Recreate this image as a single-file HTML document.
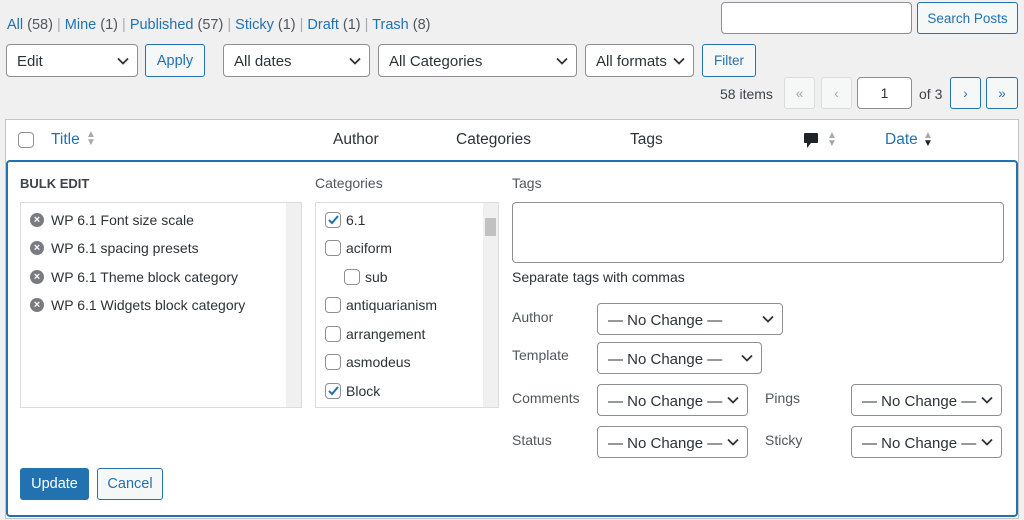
<!DOCTYPE html>
<html><head><meta charset="utf-8"><style>
*{box-sizing:border-box;margin:0;padding:0}
body{width:1024px;height:520px;background:#f0f0f1;font-family:"Liberation Sans",sans-serif;font-size:14px;color:#3c434a;position:relative;overflow:hidden}
.a{position:absolute}
.sel{position:absolute;background:#fff;border:1px solid #8c8f94;border-radius:4px;padding-left:10px;color:#2c3338;font-size:15px;display:flex;align-items:center;padding-top:2px}
.sel svg{position:absolute;right:8px;top:50%;margin-top:-4px}
.btn{position:absolute;border:1px solid #2271b1;border-radius:3px;background:#f6f7f7;color:#2271b1;font-size:13.5px;display:flex;align-items:center;justify-content:center}
.dis{border-color:#dcdcde;color:#a7aaad;background:#f6f7f7}
.lnk{color:#2271b1}
.cb{position:absolute;width:16px;height:16px;border:1px solid #8c8f94;border-radius:4px;background:#fff}
.lab{position:absolute;font-size:14px;color:#50575e}
.item{position:absolute;left:30px;font-size:14px;color:#2c3338;display:flex;align-items:center}
.x{width:14px;height:14px;border-radius:50%;background:#787c82;color:#fff;font-size:11px;line-height:14px;text-align:center;font-weight:bold;margin-right:7px}
.cat{position:absolute;font-size:14px;color:#2c3338;display:flex;align-items:center}
.cat .cb{position:relative;margin-right:5px}
</style></head><body>
<svg width="0" height="0" style="position:absolute"><defs><symbol id="ch" viewBox="0 0 12 8"><path d="M1 1.5l5 5 5-5" fill="none" stroke="#2c3338" stroke-width="1.8"/></symbol></defs></svg>

<div class="a" style="left:7px;top:17px;font-size:14.5px;color:#a7aaad;white-space:nowrap">
<span class="lnk">All</span> <span style="color:#50575e">(58)</span> | <span class="lnk">Mine</span> <span style="color:#50575e">(1)</span> | <span class="lnk">Published</span> <span style="color:#50575e">(57)</span> | <span class="lnk">Sticky</span> <span style="color:#50575e">(1)</span> | <span class="lnk">Draft</span> <span style="color:#50575e">(1)</span> | <span class="lnk">Trash</span> <span style="color:#50575e">(8)</span></div>

<div class="a" style="left:721px;top:2px;width:191px;height:32px;background:#fff;border:1px solid #8c8f94;border-radius:4px"></div>
<div class="btn" style="left:917px;top:2px;width:101px;height:32px">Search Posts</div>

<div class="sel" style="left:6px;top:44px;width:132px;height:33px">Edit<svg width="12" height="8"><use href="#ch"/></svg></div>
<div class="btn" style="left:145px;top:44px;width:60px;height:33px;font-size:14.5px">Apply</div>
<div class="sel" style="left:223px;top:44px;width:147px;height:33px">All dates<svg width="12" height="8"><use href="#ch"/></svg></div>
<div class="sel" style="left:378px;top:44px;width:199px;height:33px">All Categories<svg width="12" height="8"><use href="#ch"/></svg></div>
<div class="sel" style="left:585px;top:44px;width:109px;height:33px">All formats<svg width="12" height="8"><use href="#ch"/></svg></div>
<div class="btn" style="left:702px;top:44px;width:54px;height:33px">Filter</div>

<div class="a" style="left:720px;top:86px;font-size:14px">58 items</div>
<div class="btn dis" style="left:784px;top:77px;width:31px;height:32px">«</div>
<div class="btn dis" style="left:821px;top:77px;width:31px;height:32px">‹</div>
<div class="a" style="left:857px;top:77px;width:55px;height:32px;background:#fff;border:1px solid #8c8f94;border-radius:4px;text-align:center;line-height:30px;font-size:14px;color:#2c3338">1</div>
<div class="a" style="left:919px;top:86px;font-size:14px">of 3</div>
<div class="btn" style="left:950px;top:77px;width:31px;height:32px">›</div>
<div class="btn" style="left:986px;top:77px;width:32px;height:32px">»</div>

<div class="a" style="left:5px;top:119px;width:1014px;height:400px;background:#fff;border:1px solid #c3c4c7"></div>
<div class="cb" style="left:18px;top:132px"></div>
<div class="a" style="left:51px;top:131px;font-size:15.5px;color:#2271b1">Title</div>
<div class="a" style="left:86px;top:131px;font-size:10px;color:#a7aaad;line-height:8px">▲<br>▼</div>
<div class="a" style="left:333px;top:131px;font-size:15.5px;color:#2c3338">Author</div>
<div class="a" style="left:456px;top:131px;font-size:15.5px;color:#2c3338">Categories</div>
<div class="a" style="left:630px;top:131px;font-size:15.5px;color:#2c3338">Tags</div>
<svg class="a" style="left:803px;top:132px" width="16" height="18"><path d="M2 1h12a1 1 0 011 1v8a1 1 0 01-1 1H8l-4 5v-5H2a1 1 0 01-1-1V2a1 1 0 011-1z" fill="#1d2327"/></svg>
<div class="a" style="left:827px;top:132px;font-size:10px;color:#a7aaad;line-height:8px">▲<br>▼</div>
<div class="a" style="left:885px;top:131px;font-size:15.5px;color:#2271b1">Date</div>
<div class="a" style="left:923px;top:132px;font-size:10px;line-height:8px"><span style="color:#a7aaad">▲</span><br><span style="color:#1d2327">▼</span></div>

<div class="a" style="left:6px;top:160px;width:1012px;height:357px;background:#fff;border:2px solid #2271b1;border-radius:4px"></div>
<div class="a" style="left:20px;top:176px;font-size:13px;font-weight:bold;color:#3c434a">BULK EDIT</div>
<div class="a" style="left:20px;top:202px;width:282px;height:206px;border:1px solid #dcdcde"></div>
<div class="a" style="left:286px;top:203px;width:15px;height:204px;background:#f0f0f1"></div>
<div class="item" style="top:212px"><span class="x">×</span>WP 6.1 Font size scale</div>
<div class="item" style="top:240px"><span class="x">×</span>WP 6.1 spacing presets</div>
<div class="item" style="top:269px"><span class="x">×</span>WP 6.1 Theme block category</div>
<div class="item" style="top:297px"><span class="x">×</span>WP 6.1 Widgets block category</div>

<div class="lab" style="left:315px;top:175px">Categories</div>
<div class="a" style="left:315px;top:202px;width:184px;height:206px;border:1px solid #dcdcde"></div>
<div class="a" style="left:483px;top:203px;width:15px;height:204px;background:#f0f0f1"></div>
<div class="a" style="left:485px;top:218px;width:11px;height:18px;background:#c1c1c1"></div>
<div class="cat" style="left:325px;top:212px"><span class="cb"><svg width="16" height="16" style="position:absolute;left:-1px;top:-1px"><path d="M4 8l3 3 6-7" fill="none" stroke="#2271b1" stroke-width="2"/></svg></span>6.1</div>
<div class="cat" style="left:325px;top:240px"><span class="cb"></span>aciform</div>
<div class="cat" style="left:344px;top:269px"><span class="cb"></span>sub</div>
<div class="cat" style="left:325px;top:297px"><span class="cb"></span>antiquarianism</div>
<div class="cat" style="left:325px;top:326px"><span class="cb"></span>arrangement</div>
<div class="cat" style="left:325px;top:354px"><span class="cb"></span>asmodeus</div>
<div class="cat" style="left:325px;top:383px"><span class="cb"><svg width="16" height="16" style="position:absolute;left:-1px;top:-1px"><path d="M4 8l3 3 6-7" fill="none" stroke="#2271b1" stroke-width="2"/></svg></span>Block</div>

<div class="lab" style="left:512px;top:175px">Tags</div>
<div class="a" style="left:512px;top:202px;width:492px;height:61px;border:1px solid #8c8f94;border-radius:4px"></div>
<div class="a" style="left:512px;top:269px;font-size:14px;color:#2c3338">Separate tags with commas</div>

<div class="lab" style="left:512px;top:309px">Author</div>
<div class="sel" style="left:597px;top:303px;width:186px;height:32px">— No Change —<svg width="12" height="8"><use href="#ch"/></svg></div>
<div class="lab" style="left:512px;top:347px">Template</div>
<div class="sel" style="left:597px;top:342px;width:165px;height:32px">— No Change —<svg width="12" height="8"><use href="#ch"/></svg></div>
<div class="lab" style="left:512px;top:390px">Comments</div>
<div class="sel" style="left:597px;top:384px;width:151px;height:32px">— No Change —<svg width="12" height="8"><use href="#ch"/></svg></div>
<div class="lab" style="left:765px;top:390px">Pings</div>
<div class="sel" style="left:851px;top:384px;width:151px;height:32px">— No Change —<svg width="12" height="8"><use href="#ch"/></svg></div>
<div class="lab" style="left:512px;top:432px">Status</div>
<div class="sel" style="left:597px;top:426px;width:151px;height:32px">— No Change —<svg width="12" height="8"><use href="#ch"/></svg></div>
<div class="lab" style="left:765px;top:432px">Sticky</div>
<div class="sel" style="left:851px;top:426px;width:151px;height:32px">— No Change —<svg width="12" height="8"><use href="#ch"/></svg></div>

<div class="a" style="left:20px;top:468px;width:69px;height:32px;background:#2271b1;border-radius:3px;color:#fff;font-size:14.5px;display:flex;align-items:center;justify-content:center">Update</div>
<div class="btn" style="left:97px;top:468px;width:66px;height:32px;font-size:14.5px">Cancel</div>
</body></html>
